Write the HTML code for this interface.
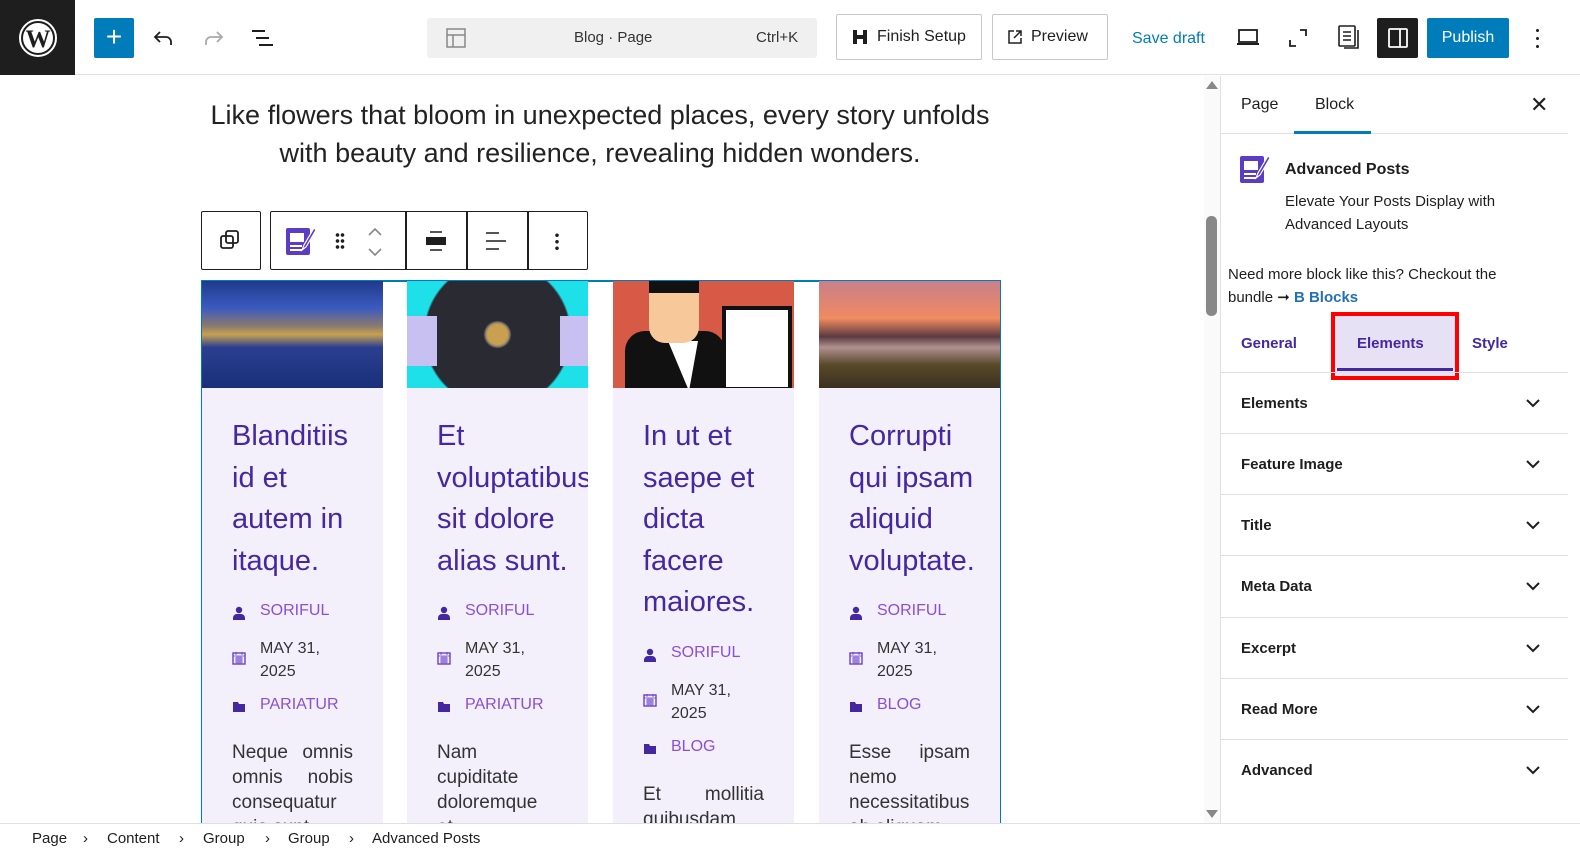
<!DOCTYPE html>
<html><head><meta charset="utf-8"><style>
*{box-sizing:border-box;margin:0;padding:0}
body{width:1580px;height:860px;overflow:hidden;font-family:"Liberation Sans",sans-serif;color:#1e1e1e;background:#fff;position:relative}
.a{position:absolute}
.top{left:0;top:0;width:1580px;height:75px;border-bottom:1px solid #e0e0e0;background:#fff}
.btn{position:absolute;border:1px solid #c8c8c8;border-radius:2px;height:46px;top:14px;font-size:16px;display:flex;align-items:center;gap:8px;padding:0 14px;color:#1e1e1e}
.card{position:absolute;top:281px;width:181px;height:560px;background:#f3f0fc;overflow:hidden}
.card .img{height:107px;position:relative;overflow:hidden}
.card h2{font-weight:400;font-size:29px;line-height:41.5px;color:#4527a0;padding:28px 0 0 30px;white-space:nowrap}
.meta{display:flex;align-items:flex-start;padding-left:30px;font-size:16px;line-height:23px;margin-top:10px;color:#8a4fd6}
.meta.f{margin-top:17px}
.meta .ic{width:28px;flex:none;padding-top:5px}
.meta.d{color:#333}
.ex{padding:19px 30px 0 30px;font-size:19px;line-height:25px;color:#333;text-align:justify}
.acc{position:absolute;left:1221px;width:347px;height:61px;border-top:1px solid #e0e0e0;font-size:15px;font-weight:700;padding:0 0 0 20px;display:flex;align-items:center;justify-content:space-between}
.acc svg{margin-right:28px}
.bc{position:absolute;top:830px;font-size:15px}
</style></head><body>
<div class="a top"></div>
<div class="a" style="left:0;top:0;width:75px;height:75px;background:#1e1e1e;display:flex;align-items:center;justify-content:center">
<svg width="40" height="40" viewBox="0 0 40 40"><circle cx="20" cy="20" r="18" fill="none" stroke="#fff" stroke-width="2"/><circle cx="20" cy="20" r="15" fill="#fff"/><text x="20" y="29" text-anchor="middle" font-family="Liberation Serif" font-size="25" font-weight="700" fill="#1e1e1e">W</text></svg></div>
<div class="a" style="left:94px;top:18px;width:40px;height:40px;background:#007cba;border-radius:2px;color:#fff;font-size:28px;text-align:center;line-height:38px">+</div>
<svg class="a" style="left:152px;top:27px" width="24" height="24" viewBox="0 0 24 24"><path d="M8 5 3 10l5 5M3 10h11a5 5 0 0 1 5 5v3" fill="none" stroke="#1e1e1e" stroke-width="1.8"/></svg>
<svg class="a" style="left:201px;top:27px" width="24" height="24" viewBox="0 0 24 24"><path d="M16 5l5 5-5 5M21 10H10a5 5 0 0 0-5 5v3" fill="none" stroke="#aaa" stroke-width="1.8"/></svg>
<svg class="a" style="left:250px;top:27px" width="26" height="24" viewBox="0 0 26 24"><path d="M2 4h13M6 11h13M9 18h14" stroke="#1e1e1e" stroke-width="2"/></svg>
<div class="a" style="left:427px;top:18px;width:390px;height:40px;background:#f0f0f0;border-radius:3px;font-size:15px">
<svg class="a" style="left:19px;top:10px" width="20" height="20" viewBox="0 0 20 20"><rect x="1" y="1" width="18" height="18" fill="none" stroke="#888" stroke-width="1.5"/><path d="M1 7h18M7 7v12" stroke="#888" stroke-width="1.5"/></svg>
<span class="a" style="left:147px;top:11px;color:#333">Blog · Page</span><span class="a" style="left:329px;top:11px;color:#333">Ctrl+K</span></div>
<div class="btn" style="left:836px;width:146px"><svg width="18" height="18" viewBox="0 0 18 18"><path d="M2 2h4v5h6V2h4v14h-4v-5H6v5H2z" fill="#1e1e1e"/></svg>Finish Setup</div>
<div class="btn" style="left:992px;width:116px"><svg width="16" height="16" viewBox="0 0 16 16"><path d="M7 2H2v12h12V9M9 2h5v5M14 2 7 9" fill="none" stroke="#1e1e1e" stroke-width="1.5"/></svg>Preview</div>
<span class="a" style="left:1132px;top:30px;font-size:16px;color:#007cba">Save draft</span>
<svg class="a" style="left:1236px;top:28px" width="24" height="20" viewBox="0 0 24 20"><rect x="3" y="2" width="18" height="12" fill="none" stroke="#1e1e1e" stroke-width="1.8"/><path d="M1 16h22" stroke="#1e1e1e" stroke-width="2"/></svg>
<svg class="a" style="left:1288px;top:28px" width="20" height="20" viewBox="0 0 20 20"><path d="M12 2h6v6M8 18H2v-6" fill="none" stroke="#1e1e1e" stroke-width="1.8"/></svg>
<svg class="a" style="left:1337px;top:24px" width="24" height="28" viewBox="0 0 24 28"><rect x="2" y="2" width="16" height="20" rx="1" fill="none" stroke="#1e1e1e" stroke-width="1.6"/><path d="M6 8h8M6 12h8M6 16h8M21 6v18H7" fill="none" stroke="#1e1e1e" stroke-width="1.6"/></svg>
<div class="a" style="left:1377px;top:18px;width:41px;height:40px;background:#1e1e1e;border-radius:2px"><svg class="a" style="left:10px;top:9px" width="22" height="22" viewBox="0 0 22 22"><rect x="2" y="2" width="18" height="18" rx="1" fill="none" stroke="#fff" stroke-width="1.8"/><path d="M13 2v18" stroke="#fff" stroke-width="1.8"/></svg></div>
<div class="a" style="left:1427px;top:18px;width:82px;height:40px;background:#007cba;border-radius:2px;color:#fff;font-size:16px;text-align:center;line-height:40px">Publish</div>
<div class="a" style="left:1536px;top:29px;width:4px;font-size:0"><div style="width:3px;height:3px;border-radius:2px;background:#1e1e1e;margin-bottom:5px"></div><div style="width:3px;height:3px;border-radius:2px;background:#1e1e1e;margin-bottom:5px"></div><div style="width:3px;height:3px;border-radius:2px;background:#1e1e1e"></div></div>

<div class="a" style="left:150px;top:96px;width:900px;text-align:center;font-size:27px;line-height:38px;color:#222;font-weight:300">Like flowers that bloom in unexpected places, every story unfolds<br>with beauty and resilience, revealing hidden wonders.</div>

<div class="a" style="left:201px;top:211px;width:60px;height:59px;border:1.5px solid #1e1e1e;border-radius:2px"><svg class="a" style="left:17px;top:17px" width="22" height="22" viewBox="0 0 22 22"><rect x="7" y="2" width="12" height="12" rx="2" fill="none" stroke="#1e1e1e" stroke-width="1.8"/><rect x="2" y="7" width="12" height="12" rx="2" fill="none" stroke="#1e1e1e" stroke-width="1.8"/></svg></div>
<div class="a" style="left:270px;top:211px;width:318px;height:59px;border:1.5px solid #1e1e1e;border-radius:2px">
<svg class="a" style="left:14px;top:13px" width="32" height="32" viewBox="0 0 32 32"><rect x="1" y="3" width="24" height="27" rx="2" fill="#5b3cc4"/><rect x="5" y="8" width="14" height="9" fill="#fff"/><path d="M5 21h12M5 25h12" stroke="#fff" stroke-width="2"/><path d="M29 3 19 20l-2 5 4-3 10-17z" fill="#5b3cc4" stroke="#fff" stroke-width="1.2"/></svg>
<div class="a" style="left:64px;top:20px;width:10px;height:18px;background:radial-gradient(circle,#1e1e1e 1.6px,transparent 2px) 0 0/5px 6px"></div>
<svg class="a" style="left:96px;top:14px" width="16" height="32" viewBox="0 0 16 32"><path d="M2 9l6-6 6 6M2 23l6 6 6-6" fill="none" stroke="#888" stroke-width="1.6"/></svg>
<div class="a" style="left:134px;top:0;width:1.5px;height:57px;background:#1e1e1e"></div>
<div class="a" style="left:195px;top:0;width:1.5px;height:57px;background:#1e1e1e"></div>
<div class="a" style="left:256px;top:0;width:1.5px;height:57px;background:#1e1e1e"></div>
<svg class="a" style="left:154px;top:18px" width="22" height="22" viewBox="0 0 22 22"><path d="M5 2h12M5 20h12" stroke="#1e1e1e" stroke-width="1.6"/><rect x="1" y="7" width="20" height="8" fill="#1e1e1e"/></svg>
<svg class="a" style="left:214px;top:18px" width="22" height="22" viewBox="0 0 22 22"><path d="M1 3h13M1 11h20M1 19h13" stroke="#1e1e1e" stroke-width="1.6"/></svg>
<div class="a" style="left:284px;top:20px;width:4px;height:18px;background:radial-gradient(circle,#1e1e1e 1.6px,transparent 2px) 0 0/4px 6.5px"></div>
</div>

<div class="a" style="left:201px;top:280px;width:800px;height:560px;border:2px solid #007cba;border-bottom:none"></div>

<svg width="0" height="0" style="position:absolute"><defs>
<symbol id="u" viewBox="0 0 14 14"><circle cx="7" cy="4" r="3.2" fill="#4527a0"/><path d="M1 14v-2a4 4 0 0 1 4-4h4a4 4 0 0 1 4 4v2z" fill="#4527a0"/></symbol>
<symbol id="c" viewBox="0 0 14 14"><rect x="1" y="2" width="12" height="11" fill="none" stroke="#6a3fc8" stroke-width="1.4"/><path d="M1 5h12M4 1v3M10 1v3M3 7h8M3 9h8M3 11h8M5 5v8M7 5v8M9 5v8" stroke="#6a3fc8" stroke-width=".8"/></symbol>
<symbol id="f" viewBox="0 0 14 14"><path d="M1 2h5l1 2h6v8H1z" fill="#4527a0"/></symbol>
</defs></svg>

<div class="card" style="left:202px"><div class="img" style="background:linear-gradient(180deg,#1f3a8a 0%,#3a5ac0 25%,#8a7a70 42%,#c8a050 50%,#2a3f8f 62%,#1a2f7a 100%)"></div>
<h2>Blanditiis<br>id et<br>autem in<br>itaque.</h2>
<div class="meta f"><span class="ic"><svg width="14" height="14"><use href="#u"/></svg></span>SORIFUL</div>
<div class="meta d"><span class="ic" style="padding-top:12px"><svg width="14" height="14"><use href="#c"/></svg></span>MAY 31,<br>2025</div>
<div class="meta"><span class="ic"><svg width="14" height="14"><use href="#f"/></svg></span>PARIATUR</div>
<div class="ex">Neque omnis omnis nobis consequatur quia sunt</div></div>

<div class="card" style="left:407px"><div class="img" style="background:radial-gradient(circle at 50% 50%,#c9a050 0 10px,#8a8070 12px,#2a2a33 14px 72px,#1de0e8 74px)"><div style="position:absolute;left:0;top:35px;width:30px;height:50px;background:#c8c0f0"></div><div style="position:absolute;right:0;top:35px;width:28px;height:50px;background:#c8c0f0"></div></div>
<h2>Et<br>voluptatibus<br>sit dolore<br>alias sunt.</h2>
<div class="meta f"><span class="ic"><svg width="14" height="14"><use href="#u"/></svg></span>SORIFUL</div>
<div class="meta d"><span class="ic" style="padding-top:12px"><svg width="14" height="14"><use href="#c"/></svg></span>MAY 31,<br>2025</div>
<div class="meta"><span class="ic"><svg width="14" height="14"><use href="#f"/></svg></span>PARIATUR</div>
<div class="ex" style="text-align:left">Nam cupiditate doloremque et</div></div>

<div class="card" style="left:613px"><div class="img" style="background:#d65a45"><div style="position:absolute;left:12px;top:50px;width:100px;height:60px;background:#111;border-radius:20px 20px 0 0"></div><div style="position:absolute;left:55px;top:60px;width:30px;height:50px;background:#fff;clip-path:polygon(0 0,100% 0,70% 100%)"></div><div style="position:absolute;left:36px;top:0;width:50px;height:62px;background:#f7c99a;border-radius:0 0 16px 16px"></div><div style="position:absolute;left:36px;top:0;width:50px;height:12px;background:#111"></div><div style="position:absolute;left:109px;top:25px;width:70px;height:85px;background:#fff;border:4px solid #111"></div></div>
<h2>In ut et<br>saepe et<br>dicta<br>facere<br>maiores.</h2>
<div class="meta f"><span class="ic"><svg width="14" height="14"><use href="#u"/></svg></span>SORIFUL</div>
<div class="meta d"><span class="ic" style="padding-top:12px"><svg width="14" height="14"><use href="#c"/></svg></span>MAY 31,<br>2025</div>
<div class="meta"><span class="ic"><svg width="14" height="14"><use href="#f"/></svg></span>BLOG</div>
<div class="ex">Et mollitia quibusdam</div></div>

<div class="card" style="left:819px"><div class="img" style="background:linear-gradient(180deg,#c8808a 0%,#f08a60 35%,#5a3a40 52%,#b09090 62%,#5a4a2a 78%,#3a3020 100%)"></div>
<h2>Corrupti<br>qui ipsam<br>aliquid<br>voluptate.</h2>
<div class="meta f"><span class="ic"><svg width="14" height="14"><use href="#u"/></svg></span>SORIFUL</div>
<div class="meta d"><span class="ic" style="padding-top:12px"><svg width="14" height="14"><use href="#c"/></svg></span>MAY 31,<br>2025</div>
<div class="meta"><span class="ic"><svg width="14" height="14"><use href="#f"/></svg></span>BLOG</div>
<div class="ex">Esse ipsam nemo necessitatibus ab aliquam</div></div>

<div class="a" style="left:1204px;top:76px;width:16px;height:748px;background:#fafafa"></div>
<div class="a" style="left:1206px;top:81px;width:0;height:0;border:6px solid transparent;border-bottom:8px solid #888;border-top:none"></div>
<div class="a" style="left:1206px;top:216px;width:11px;height:100px;background:#888;border-radius:5px"></div>
<div class="a" style="left:1206px;top:810px;width:0;height:0;border:6px solid transparent;border-top:8px solid #888;border-bottom:none"></div>

<div class="a" style="left:1220px;top:76px;width:1px;height:748px;background:#e0e0e0"></div>
<div class="a" style="left:1221px;top:133px;width:347px;height:1px;background:#e0e0e0"></div>
<span class="a" style="left:1241px;top:96px;font-size:16px">Page</span>
<span class="a" style="left:1315px;top:96px;font-size:16px">Block</span>
<div class="a" style="left:1294px;top:131px;width:77px;height:3px;background:#007cba"></div>
<span class="a" style="left:1530px;top:92px;font-size:22px">✕</span>
<svg class="a" style="left:1239px;top:153px" width="32" height="32" viewBox="0 0 32 32"><rect x="1" y="3" width="24" height="27" rx="2" fill="#5b3cc4"/><rect x="5" y="8" width="14" height="9" fill="#fff"/><path d="M5 21h12M5 25h12" stroke="#fff" stroke-width="2"/><path d="M29 3 19 20l-2 5 4-3 10-17z" fill="#5b3cc4" stroke="#fff" stroke-width="1.2"/></svg>
<span class="a" style="left:1285px;top:161px;font-size:16px;font-weight:700">Advanced Posts</span>
<div class="a" style="left:1285px;top:190px;font-size:15px;line-height:23px;width:260px">Elevate Your Posts Display with Advanced Layouts</div>
<div class="a" style="left:1228px;top:263px;font-size:15px;line-height:23px;width:295px">Need more block like this? Checkout the bundle ➞ <b style="color:#2271b1">B Blocks</b></div>
<span class="a" style="left:1241px;top:335px;font-size:15px;font-weight:700;color:#4527a0">General</span>
<div class="a" style="left:1331px;top:312px;width:128px;height:68px;border:4px solid #f00;background:#e6e1f5"></div>
<div class="a" style="left:1337px;top:368px;width:116px;height:3px;background:#4527a0"></div>
<span class="a" style="left:1357px;top:335px;font-size:15px;font-weight:700;color:#4527a0">Elements</span>
<span class="a" style="left:1472px;top:335px;font-size:15px;font-weight:700;color:#4527a0">Style</span>
<div class="acc" style="top:372px">Elements<svg width="14" height="9" viewBox="0 0 14 9"><path d="M1 1l6 6 6-6" fill="none" stroke="#1e1e1e" stroke-width="2"/></svg></div>
<div class="acc" style="top:433px">Feature Image<svg width="14" height="9" viewBox="0 0 14 9"><path d="M1 1l6 6 6-6" fill="none" stroke="#1e1e1e" stroke-width="2"/></svg></div>
<div class="acc" style="top:494px">Title<svg width="14" height="9" viewBox="0 0 14 9"><path d="M1 1l6 6 6-6" fill="none" stroke="#1e1e1e" stroke-width="2"/></svg></div>
<div class="acc" style="top:555px">Meta Data<svg width="14" height="9" viewBox="0 0 14 9"><path d="M1 1l6 6 6-6" fill="none" stroke="#1e1e1e" stroke-width="2"/></svg></div>
<div class="acc" style="top:617px">Excerpt<svg width="14" height="9" viewBox="0 0 14 9"><path d="M1 1l6 6 6-6" fill="none" stroke="#1e1e1e" stroke-width="2"/></svg></div>
<div class="acc" style="top:678px">Read More<svg width="14" height="9" viewBox="0 0 14 9"><path d="M1 1l6 6 6-6" fill="none" stroke="#1e1e1e" stroke-width="2"/></svg></div>
<div class="acc" style="top:739px">Advanced<svg width="14" height="9" viewBox="0 0 14 9"><path d="M1 1l6 6 6-6" fill="none" stroke="#1e1e1e" stroke-width="2"/></svg></div>

<div class="a" style="left:0;top:823px;width:1580px;height:37px;background:#fff;border-top:1px solid #e0e0e0"></div>
<span class="bc" style="left:32px">Page</span><span class="bc" style="left:83px">›</span>
<span class="bc" style="left:107px">Content</span><span class="bc" style="left:179px">›</span>
<span class="bc" style="left:203px">Group</span><span class="bc" style="left:265px">›</span>
<span class="bc" style="left:288px">Group</span><span class="bc" style="left:349px">›</span>
<span class="bc" style="left:372px">Advanced Posts</span>
</body></html>
